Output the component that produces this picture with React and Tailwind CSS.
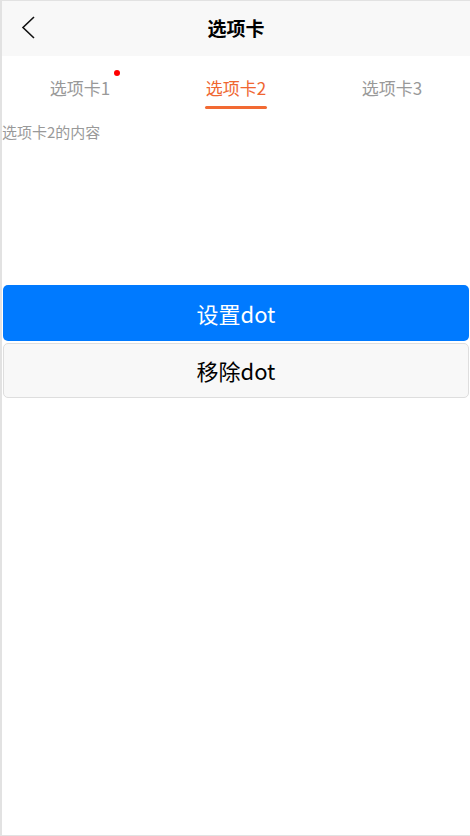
import { ChevronLeft } from 'lucide-react';

const tabs = [
  { id: 1, label: '选项卡1', dot: true },
  { id: 2, label: '选项卡2', dot: false },
  { id: 3, label: '选项卡3', dot: false },
];

export default function App() {
  const active = 2;

  return (
    <div className="h-[836px] border-t border-b border-l-2 border-[#e2e2e2] bg-white font-['Noto_Sans_CJK_SC','Noto_Sans',sans-serif]">
      <header className="relative flex h-[55px] items-center justify-center bg-[#f8f8f8]">
        <svg
          className="absolute left-[19px] top-[15px] h-[23px] w-[14px]"
          viewBox="0 0 14 23"
          fill="none"
          stroke="#111"
          strokeWidth="1.6"
        >
          <polyline points="13,1 2,11.5 13,22" />
        </svg>
        <h1 className="text-[19px] font-bold text-black">选项卡</h1>
      </header>

      <nav className="flex pt-[20px]">
        {tabs.map((tab) => {
          const on = tab.id === active;
          return (
            <div key={tab.id} className="flex flex-1 flex-col items-center">
              <span
                className={`relative text-[17px] leading-[24px] ${on ? 'text-[#ef6631]' : 'text-[#999]'}`}
              >
                {tab.label}
                {tab.dot && (
                  <span className="absolute -right-[10px] -top-[6px] h-[6px] w-[6px] rounded-full bg-[#f00]" />
                )}
              </span>
              <span className={`mt-[6px] h-[3px] w-[62px] rounded-full ${on ? 'bg-[#f26a33]' : 'bg-transparent'}`} />
            </div>
          );
        })}
      </nav>

      <p className="mt-[13px] text-[15px] leading-[20px] text-[#999]">选项卡2的内容</p>

      <div className="mt-[143px] flex flex-col gap-[2px] px-px">
        <button className="h-[56px] rounded-[5px] bg-[#007aff] text-[22px] text-white">设置dot</button>
        <button className="h-[55px] rounded-[5px] border border-[#dedede] bg-[#f8f8f8] text-[22px] text-black">移除dot</button>
      </div>
    </div>
  );
}
